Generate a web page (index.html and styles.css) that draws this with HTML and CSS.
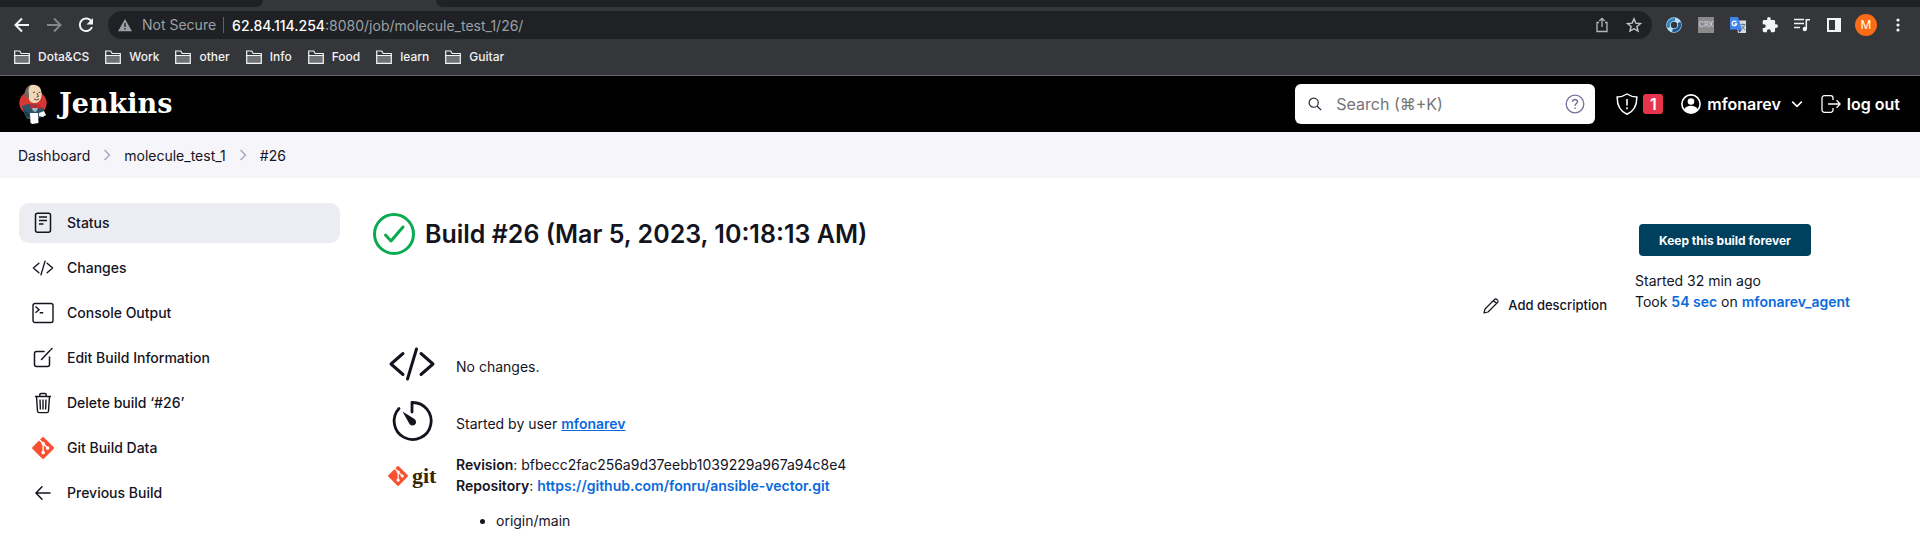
FILE: index.html
```html
<!DOCTYPE html>
<html lang="en">
<head>
<meta charset="utf-8">
<title>molecule_test_1 #26 [Jenkins]</title>
<link rel="stylesheet" href="styles.css">
</head>
<body>
<svg class="defs" aria-hidden="true">
  <symbol id="folder" viewBox="0 0 18 16"><path d="M1 14V2h5l1.500 2H17v10z" fill="#35363a"/><path d="M1.500 7h15v7h-15z" fill="#707175"/><path d="M1.700 14.300V2h5l1.500 2.500h8.100v9.800zM1 6.500h16" fill="none" stroke="#f1f3f4" stroke-width="1.200"/></symbol>
  <symbol id="chev" viewBox="0 0 8 12"><path d="M1.500 1l5 5-5 5" fill="none" stroke="#a9a9bd" stroke-width="1.500"/></symbol>
  <symbol id="code" viewBox="0 0 512 512"><path d="M160 368L32 256l128-112M352 368l128-112-128-112M304 96l-96 320" fill="none" stroke="currentColor" stroke-linecap="round" stroke-linejoin="round" stroke-width="32"/></symbol>
  <symbol id="git" viewBox="0 0 92 92"><path d="M90 41.700L50.300 2a5.900 5.900 0 0 0-8.300 0l-8.200 8.300 10.400 10.400a7 7 0 0 1 8.900 8.900l10 10a7 7 0 1 1-4.200 4l-9.400-9.400v24.600a7 7 0 1 1-5.700-.2V33.800a7 7 0 0 1-3.800-9.200L29.700 14.400 2.600 41.500a5.900 5.900 0 0 0 0 8.300l39.700 39.700a5.900 5.900 0 0 0 8.300 0L90 50a5.900 5.900 0 0 0 0-8.300z" fill="#f9502f"/></symbol>
</svg>

<div class="browser">
  <div class="tabs"><span class="tab before"></span><span class="tab active"></span><span class="tab after"></span></div>
  <div class="toolbar">
    <button class="tool" aria-label="Back"><svg viewBox="0 0 16 16"><path d="M15 8H2M8 1.500L1.500 8 8 14.500" fill="none" stroke="#f1f3f4" stroke-width="2"/></svg></button>
    <button class="tool" aria-label="Forward"><svg viewBox="0 0 16 16"><path d="M1 8h13M8 1.500L14.500 8 8 14.500" fill="none" stroke="#85868a" stroke-width="2"/></svg></button>
    <button class="tool" aria-label="Reload"><svg viewBox="0 0 16 16"><path d="M13.500 4.500A6.300 6.300 0 1 0 14 10" fill="none" stroke="#f1f3f4" stroke-width="2"/><path d="M15 1v6.500H8.500z" fill="#f1f3f4"/></svg></button>
    <div class="omnibox">
      <svg class="warn" viewBox="0 0 16 14"><path d="M8 0l8 14H0z" fill="#9aa0a6"/><path d="M8 4.800v4.400M8 10.500v1.700" stroke="#202124" stroke-width="1.600"/></svg>
      <span class="notsecure">Not Secure</span>
      <span class="url"><b>62.84.114.254</b>:8080/job/molecule_test_1/26/</span>
      <button class="tool" aria-label="Share"><svg viewBox="0 0 16 16"><path d="M5 5.500H3v9h10v-9h-2M8 10V1.500M5.300 4L8 1.300 10.700 4" fill="none" stroke="#b4b6ba" stroke-width="1.300"/></svg></button>
      <button class="tool" aria-label="Bookmark"><svg viewBox="0 0 16 16"><path d="M8 1.800l1.800 4.300 4.700.4-3.600 3 1.100 4.600L8 11.700l-4 2.400 1.100-4.600-3.600-3 4.700-.4z" fill="none" stroke="#c4c6ca" stroke-width="1.400"/></svg></button>
    </div>
    <div class="extensions">
      <button class="tool" aria-label="Swirl"><svg viewBox="0 0 16 16"><circle cx="8" cy="8" r="5.500" fill="none" stroke="#b9dcf4" stroke-width="4.600"/><path d="M3 10.500A5.500 5.500 0 0 1 9 2.600" fill="none" stroke="#2f86cb" stroke-width="3"/><path d="M13 5.500A5.500 5.500 0 0 1 6.500 13.300" fill="none" stroke="#1c5a96" stroke-width="3"/></svg></button>
      <button class="tool crx" aria-label="CRX">CRX</button>
      <button class="tool" aria-label="Translate"><svg viewBox="0 0 16 16"><path d="M6 3.500h10V16H8z" fill="#d8dadd"/><path d="M0 0h8l4 12.500H0z" fill="#3f83f0"/><path d="M8 12.500h4L9.500 15.700z" fill="#2148b0"/><path d="M6.300 5A2.300 2.300 0 1 0 6.700 6.800H4.500" fill="none" stroke="#fff" stroke-width="1.300"/><path d="M10.700 7.500h4.600M12.700 6.300v1.200M14.500 7.500c-.5 2.500-1.500 4-3 4.700M11.800 9l3.200 4" fill="none" stroke="#5d7d88"/></svg></button>
      <button class="tool" aria-label="Extensions"><svg viewBox="1 1 22 22"><path d="M20.500 11H19V7a2 2 0 0 0-2-2h-4V3.500a2.500 2.500 0 0 0-5 0V5H4a2 2 0 0 0-2 2v3.800h1.500a2.700 2.700 0 0 1 0 5.400H2V20a2 2 0 0 0 2 2h3.800v-1.500a2.700 2.700 0 0 1 5.400 0V22H17a2 2 0 0 0 2-2v-4h1.500a2.500 2.500 0 0 0 0-5z" fill="#f1f3f4"/></svg></button>
      <button class="tool" aria-label="Media"><svg viewBox="0 0 16 16"><path d="M0 2.500h10M0 6.500h10M0 10.500h6M12.300 12V2.700H16" fill="none" stroke="#f1f3f4" stroke-width="1.600"/><circle cx="10.800" cy="12" r="2.200" fill="#f1f3f4"/></svg></button>
      <button class="tool" aria-label="Side panel"><svg viewBox="0 0 16 16"><path d="M1 1h14v14H1zM3 3v10h6V3z" fill="#f1f3f4" fill-rule="evenodd"/></svg></button>
      <button class="profile" aria-label="Profile">M</button>
      <button class="tool" aria-label="Menu"><svg viewBox="0 0 16 16"><g fill="#f1f3f4"><circle cx="8" cy="3" r="1.600"/><circle cx="8" cy="8" r="1.600"/><circle cx="8" cy="13" r="1.600"/></g></svg></button>
    </div>
  </div>
  <nav class="bookmarks" aria-label="Bookmarks">
    <a href="#"><svg><use href="#folder"/></svg>Dota&amp;CS</a>
    <a href="#"><svg><use href="#folder"/></svg>Work</a>
    <a href="#"><svg><use href="#folder"/></svg>other</a>
    <a href="#"><svg><use href="#folder"/></svg>Info</a>
    <a href="#"><svg><use href="#folder"/></svg>Food</a>
    <a href="#"><svg><use href="#folder"/></svg>learn</a>
    <a href="#"><svg><use href="#folder"/></svg>Guitar</a>
  </nav>
</div>

<header class="header">
  <a class="brand" href="#">
    <svg viewBox="0 0 28 42"><ellipse cx="14" cy="20" rx="13.700" ry="12.500" fill="#d33833"/><path d="M3 23l6-2 10 1 6 4 0 7-7 3H8L5 30z" fill="#2d5265"/><path d="M7 7c2-5 7-6 11-4.500 4 2 5 6 4.500 10.500-.5 4-3 7-6.500 7-4 0-6-2-6.500-6l-3-2z" fill="#f0d6b7"/><path d="M5.500 12c0-5 2-8 6-10-2 3-2.500 6-1.500 9v4c-2 0-3.500-1-4.500-3z" fill="#6b6762"/><path d="M14 9.500l2-.5M19.500 9.500l2-.5M18 10l1.500 3.500-2 .5M15 16q3 2 5 0" fill="none" stroke="#49392c" stroke-width=".9"/><path d="M11 21l5 2 5-2 1 5-6-2-4 2z" fill="#e01f27"/><path d="M13 25h6l-2 4-3-1z" fill="#9fb6c4"/><path d="M11 30h8l.5 10-6 1-2-1z" fill="#fff"/><path d="M20 30l5-2 2 4-3 2-4-1z" fill="#f4f4f4"/><path d="M5 26l5 5 1 4-4-2z" fill="#1d3a4c"/></svg>
    <span>Jenkins</span>
  </a>
  <div class="search">
    <svg viewBox="0 0 16 16"><circle cx="6.500" cy="6.500" r="5.200" fill="none" stroke="#2a2a3a" stroke-width="1.400"/><path d="M10.300 10.300L15 15" stroke="#2a2a3a" stroke-width="1.500"/></svg>
    <input type="text" aria-label="Search" placeholder="Search (⌘+K)">
    <a class="help" href="#" aria-label="Help"><svg viewBox="0 0 20 20"><circle cx="10" cy="10" r="8.800" fill="none" stroke="#73739a" stroke-width="1.300"/><path d="M7.500 7.800c.1-3 5-3 5-.1 0 1.800-2.400 1.900-2.400 4M10 13.500v1.600" fill="none" stroke="#73739a" stroke-width="1.500"/></svg></a>
  </div>
  <a class="alert" href="#" aria-label="Security warnings: 1"><svg viewBox="0 0 22 22"><path d="M11 1c3 2 6 2.800 9.800 2.900C21 12 18 18 11 21.300 4 18 1 12 1.200 3.900 5 3.800 8 3 11 1z" fill="none" stroke="#fff" stroke-width="1.500"/><path d="M11 6v6.500M11 14.200v2" stroke="#fff" stroke-width="1.600"/></svg><span>1</span></a>
  <a class="user" href="#"><svg viewBox="0 0 20 20"><circle cx="10" cy="10" r="9.100" fill="none" stroke="#fff" stroke-width="1.600"/><circle cx="10" cy="7.500" r="3.300" fill="#fff"/><path d="M3.300 15.500c1.500-5 12-5 13.400 0A9 9 0 0 1 10 19a9 9 0 0 1-6.700-3.500z" fill="#fff"/></svg><span>mfonarev</span><svg class="down" viewBox="0 0 10 10"><path d="M1 3l4 4 4-4" fill="none" stroke="#fff" stroke-width="1.300"/></svg></a>
  <a class="logout" href="#"><svg viewBox="0 0 20 20"><path d="M12 6V4a2.300 2.300 0 0 0-2.300-2.300H3.300A2.300 2.300 0 0 0 1 4v12a2.300 2.300 0 0 0 2.300 2.300h6.400A2.300 2.300 0 0 0 12 16v-2M7 10h12M15.500 6.300L19.200 10l-3.700 3.700" fill="none" stroke="#fff" stroke-width="1.300"/></svg><span>log out</span></a>
</header>

<nav class="crumbs" aria-label="Breadcrumbs">
  <a href="#">Dashboard</a><svg><use href="#chev"/></svg><a href="#">molecule_test_1</a><svg><use href="#chev"/></svg><a href="#">#26</a>
</nav>

<div class="page">
  <nav class="side" aria-label="Build">
    <a class="on" href="#"><svg viewBox="0 0 22 22"><rect x="3.500" y="1.200" width="15" height="19" rx="2" fill="none" stroke="currentColor" stroke-width="1.500"/><path d="M7 5h8M7 8.500h8M7 12h4.500" stroke="currentColor" stroke-width="1.500"/></svg>Status</a>
    <a href="#"><svg><use href="#code"/></svg>Changes</a>
    <a href="#"><svg viewBox="0 0 22 22"><rect x="1" y="1.500" width="20" height="19" rx="2" fill="none" stroke="currentColor" stroke-width="1.400"/><path d="M3.500 4.500L7 7.700l-3.500 3M7.700 10.700h3.500" fill="none" stroke="currentColor" stroke-width="1.400"/></svg>Console Output</a>
    <a href="#"><svg viewBox="0 0 22 22"><path d="M12 4.500H4.500a2 2 0 0 0-2 2v11a2 2 0 0 0 2 2h11a2 2 0 0 0 2-2V10M9.500 12.500l8.500-9M19 2.500l1-1" fill="none" stroke="currentColor" stroke-width="1.500" stroke-linecap="round"/></svg>Edit Build Information</a>
    <a href="#"><svg viewBox="0 0 22 22"><path d="M3 4.500h16M4.500 4.500l1 14.500a1.700 1.700 0 0 0 1.700 1.600h7.600a1.700 1.700 0 0 0 1.700-1.600l1-14.500M7.800 4.500V2.700a1.200 1.200 0 0 1 1.200-1.200h4a1.200 1.200 0 0 1 1.200 1.200v1.800M8 7.500l.4 10M11 7.500v10M14 7.500l-.4 10" fill="none" stroke="currentColor" stroke-width="1.400"/></svg>Delete build ‘#26’</a>
    <a href="#"><svg><use href="#git"/></svg>Git Build Data</a>
    <a href="#"><svg viewBox="0 0 22 22"><path d="M18 11H4.500M10 4.800L4 11l6 6.200" fill="none" stroke="currentColor" stroke-width="1.500" stroke-linecap="round"/></svg>Previous Build</a>
  </nav>

  <main class="main">
    <div class="content">
      <h1><svg viewBox="0 0 42 42"><circle cx="21" cy="21" r="19.500" fill="none" stroke="#0aaa50" stroke-width="3"/><path d="M12.500 22l5.500 6 12-14" fill="none" stroke="#0aaa50" stroke-width="3" stroke-linecap="round" stroke-linejoin="round"/></svg>Build #26 (Mar 5, 2023, 10:18:13 AM)</h1>
      <a class="describe" href="#"><svg viewBox="0 0 16 16"><path d="M1 15l1-4L11.500 1.500a1.600 1.600 0 0 1 2.400 0l.6.600a1.600 1.600 0 0 1 0 2.400L5 14zM10.500 2.500l3 3" fill="none" stroke="currentColor" stroke-width="1.200" stroke-linejoin="round"/></svg>Add description</a>
      <div class="row changes"><svg class="big"><use href="#code"/></svg><p>No changes.</p></div>
      <div class="row cause"><svg class="big" viewBox="0 0 48 48"><path d="M24 15V5.500A18.500 18.500 0 1 1 11 11.500" fill="none" stroke="currentColor" stroke-width="2.800" stroke-linecap="round" stroke-linejoin="round"/><path d="M14.500 14.500l12 7.500a3.600 3.600 0 1 1-5 5z" fill="currentColor"/></svg><p>Started by user <a class="under" href="#">mfonarev</a></p></div>
      <div class="row scm"><div class="gitlogo"><svg><use href="#git"/></svg><span>git</span></div>
        <div><p><b>Revision</b>: bfbecc2fac256a9d37eebb1039229a967a94c8e4<br><b>Repository</b>: <a href="#">https://github.com/fonru/ansible-vector.git</a></p><ul><li>origin/main</li></ul></div>
      </div>
    </div>
    <aside class="meta">
      <button class="keep">Keep this build forever</button>
      <p>Started 32 min ago<br>Took <a href="#">54 sec</a> on <a href="#">mfonarev_agent</a></p>
    </aside>
  </main>
</div>
</body>
</html>
```
FILE: styles.css
```css
* { box-sizing: border-box; }
body { margin: 0; background: #fff; color: #14141f; font: 14px/21px Inter, "Noto Sans", sans-serif; }
a { color: inherit; text-decoration: none; }
p, h1, ul { margin: 0; }
b { font-weight: 600; }
button { border: 0; padding: 0; background: none; font: inherit; color: inherit; }
svg { flex: none; display: block; }
.defs { position: absolute; width: 0; height: 0; }

.browser { background: #35363a; border-bottom: 1px solid #66676a; font-family: Inter, Roboto, sans-serif; }
.tabs { display: flex; height: 7px; background: #35363a; }
.tab { background: #202124; }
.before { width: 263px; border-bottom-right-radius: 7px; }
.active { width: 173px; background: #35363a; }
.after { flex: 1; border-bottom-left-radius: 7px; }
.toolbar { display: flex; align-items: center; gap: 16px; height: 36px; padding: 0 14px; }
.tool { width: 16px; height: 16px; }
.tool svg { width: 16px; height: 16px; }
.omnibox { flex: 1; display: flex; align-items: center; height: 28px; margin: 0 -2px; padding: 0 10px; border-radius: 14px; background: #202124; color: #9aa0a6; }
.omnibox .tool { margin-left: 16px; }
.warn { width: 14px; height: 14px; margin-right: 10px; }
.notsecure { padding-right: 7px; border-right: 1px solid #5f6368; line-height: 16px; }
.url { flex: 1; padding-left: 8px; }
.url b { color: #fff; font-weight: 500; }
.extensions { display: flex; align-items: center; gap: 16px; }
.crx { background: #8b8b8b; color: #ddd; font-size: 7px; line-height: 16px; }
.profile { width: 22px; height: 22px; margin: 0 -3px; border-radius: 50%; background: #fa6c16; color: #fff; font-size: 12px; line-height: 22px; }
.bookmarks { display: flex; gap: 15px; height: 32px; padding: 4px 13px 0; color: #f1f3f4; font-size: 12px; font-weight: 500; line-height: 20px; }
.bookmarks a { display: flex; gap: 7px; align-items: flex-start; }
.bookmarks svg { width: 18px; height: 16px; margin-top: 2px; }

.header { display: flex; align-items: center; height: 56px; padding: 0 20px 0 19px; background: #000; color: #fff; font-size: 16px; font-weight: 600; }
.brand { display: flex; align-items: center; gap: 12px; margin-right: auto; font: bold 27px/40px "DejaVu Serif", serif; }
.brand svg { width: 28px; height: 42px; }
.search { display: flex; align-items: center; width: 300px; height: 40px; padding: 0 10px 0 13px; border-radius: 6px; background: #fff; }
.search > svg { width: 14px; height: 14px; }
.search input { flex: 1; min-width: 0; margin: 0 14px; padding: 0; border: 0; outline: 0; background: none; font: 16px/24px Inter, "DejaVu Sans", sans-serif; }
.search input::placeholder { color: #757575; }
.help svg { width: 20px; height: 20px; }
.alert { display: flex; align-items: center; gap: 5px; margin-left: 21px; }
.alert svg { width: 22px; height: 22px; }
.alert span { width: 20px; height: 20px; border-radius: 3px; background: #e6354a; text-align: center; line-height: 20px; }
.user, .logout { display: flex; align-items: center; gap: 6px; }
.user { margin: 0 18px; }
.user svg, .logout svg { width: 20px; height: 20px; }
.user .down { width: 12px; height: 12px; margin-left: 4px; }

.crumbs { display: flex; align-items: center; height: 46px; padding: 0 18px; gap: 13px; background: #f5f5fa; font-size: 14px; font-weight: 400; }
.crumbs svg { width: 8px; height: 12px; }

.page { display: flex; padding: 25px 19px 0; }
.side { display: flex; flex-direction: column; gap: 5px; width: 321px; flex: none; font-weight: 500; line-height: 20px; }
.side a { display: flex; align-items: center; gap: 13px; height: 40px; padding: 0 13px; border-radius: 10px; }
.side .on { background: #ecedf3; }
.side svg { width: 22px; height: 22px; }
.main { flex: 1; display: flex; gap: 28px; padding-left: 33px; }
.content { flex: 1; }
.content a, .meta a { color: #0b6adb; font-weight: 600; }
h1 { display: flex; align-items: center; gap: 10px; padding-top: 10px; font-size: 25px; line-height: 42px; font-weight: 600; }
h1 svg { width: 42px; height: 42px; }
.content .describe { display: flex; justify-content: flex-end; align-items: center; gap: 9px; margin-top: 40px; color: inherit; font-size: 13px; font-weight: 500; }
.describe svg { width: 16px; height: 16px; }
.row { display: flex; gap: 20px; padding-left: 15px; }
.changes { margin-top: 24px; }
.big { width: 48px; height: 48px; }
.changes p { padding-top: 16px; }
.cause { margin-top: 9px; }
.cause p { padding-top: 16px; }
.cause .under { text-decoration: underline; }
.scm { margin-top: 9px; }
.gitlogo { display: flex; align-items: center; gap: 4px; width: 48px; height: 44px; color: #362701; font: bold 22px/24px "Liberation Serif", serif; }
.gitlogo svg { width: 20px; height: 20px; }
ul { margin-top: 14px; padding-left: 40px; }
.meta { width: 266px; flex: none; padding-top: 21px; }
.keep { height: 32px; margin: 0 0 14px 4px; padding: 0 20px; border-radius: 4px; background: #00405f; color: #fff; font-size: 12px; font-weight: 700; display: block; }
```
